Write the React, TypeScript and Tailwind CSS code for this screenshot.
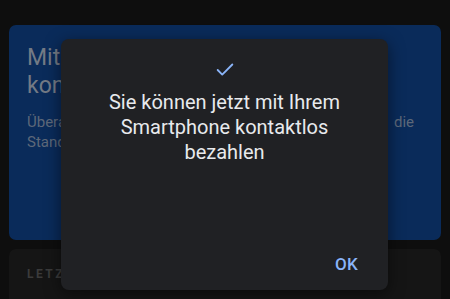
import { Check } from 'lucide-react';

export default function App() {
  return (
    <div
      className="relative h-[299px] w-[450px] overflow-hidden bg-[#0e0e0e]"
      style={{ fontFamily: 'Roboto, "Noto Sans", sans-serif' }}
    >
      <div className="flex flex-col gap-[9px] px-[9px] pt-[25px]">
        {/* Promo card */}
        <div className="h-[215px] rounded-[7px] bg-[#0a2b5a] px-[18px] pt-[19px]">
          <h1 className="text-[23px] leading-[28px] text-[#737a85]">
            Mit Ihrem Smartphone
            <br />
            kontaktlos bezahlen
          </h1>
          <p className="mt-[12px] text-[15px] leading-[20px] text-[#5d6879]">
            <span className="flex whitespace-nowrap">
              <span className="w-[367px]">Überall bezahlen, wo kontaktloses Zahlen geht. Über</span>
              <span>die</span>
            </span>
            <span className="block whitespace-nowrap">Standardkarte wird bezahlt.</span>
          </p>
        </div>

        {/* Recent activity card */}
        <div className="h-[80px] rounded-[7px] bg-[#151515] px-[18px] pt-[16px]">
          <p className="text-[12px] font-bold uppercase tracking-[2.5px] text-[#3b3b3b]">
            Letzte
          </p>
        </div>
      </div>

      {/* Dialog */}
      <div className="absolute left-[61px] top-[39px] flex h-[251px] w-[327px] flex-col items-center rounded-[8px] bg-[#202124] shadow-[0_4px_16px_rgba(0,0,0,0.5)]">
        <Check className="mt-[20px] h-[22px] w-[22px] text-[#8ab4f8]" strokeWidth={2} />
        <p className="mt-[9px] px-[20px] text-center text-[20px] leading-[25px] text-[#e8eaed]">
          Sie können jetzt mit Ihrem
          <br />
          Smartphone kontaktlos
          <br />
          bezahlen
        </p>
        <div className="mt-auto flex w-full justify-end pb-[13px] pr-[30px]">
          <button className="text-[17px] font-medium tracking-[0.3px] text-[#8ab4f8]">OK</button>
        </div>
      </div>
    </div>
  );
}
